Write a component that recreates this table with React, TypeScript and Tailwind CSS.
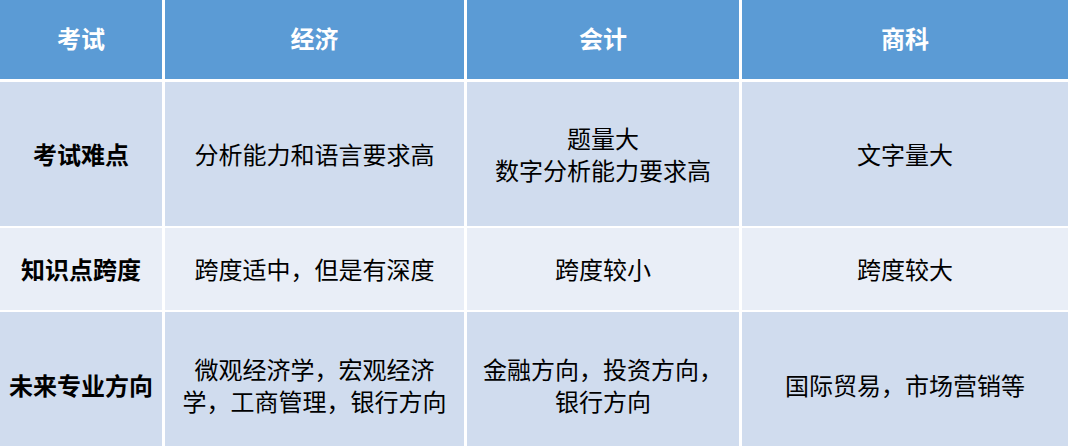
const rows = [
  {
    label: "考试难点",
    cells: [["分析能力和语言要求高"], ["题量大", "数字分析能力要求高"], ["文字量大"]],
    bg: "bg-[#d0dcee]",
    height: "h-[144px]",
  },
  {
    label: "知识点跨度",
    cells: [["跨度适中，但是有深度"], ["跨度较小"], ["跨度较大"]],
    bg: "bg-[#e9eef7]",
    height: "h-[82px]",
  },
  {
    label: "未来专业方向",
    cells: [
      ["微观经济学，宏观经济", "学，工商管理，银行方向"],
      ["金融方向，投资方向，", "银行方向"],
      ["国际贸易，市场营销等"],
    ],
    bg: "bg-[#d0dcee]",
    height: "h-[146px]",
  },
];

const headers = ["考试", "经济", "会计", "商科"];

const gridCols = "grid grid-cols-[162px_299px_272px_1fr] gap-x-[3px]";

export default function App() {
  return (
    <div
      className="h-[446px] w-[1068px] overflow-hidden bg-white text-[24px] leading-[32px] text-black"
      style={{ fontFamily: '"Noto Sans CJK SC", "Noto Sans", sans-serif' }}
    >
      <div className="flex flex-col gap-[2px]">
        <div className={`${gridCols} mb-[1px] h-[79px]`}>
          {headers.map((h) => (
            <div
              key={h}
              className="flex items-center justify-center bg-[#5b9bd5] pb-[3px] font-bold text-white"
            >
              {h}
            </div>
          ))}
        </div>

        {rows.map((row) => (
          <div key={row.label} className={`${gridCols} ${row.height}`}>
            <div className={`flex items-center justify-center font-bold ${row.bg}`}>
              {row.label}
            </div>
            {row.cells.map((lines, i) => (
              <div
                key={i}
                className={`flex flex-col items-center justify-center text-center ${row.bg}`}
              >
                {lines.map((line) => (
                  <span key={line}>{line}</span>
                ))}
              </div>
            ))}
          </div>
        ))}
      </div>
    </div>
  );
}
